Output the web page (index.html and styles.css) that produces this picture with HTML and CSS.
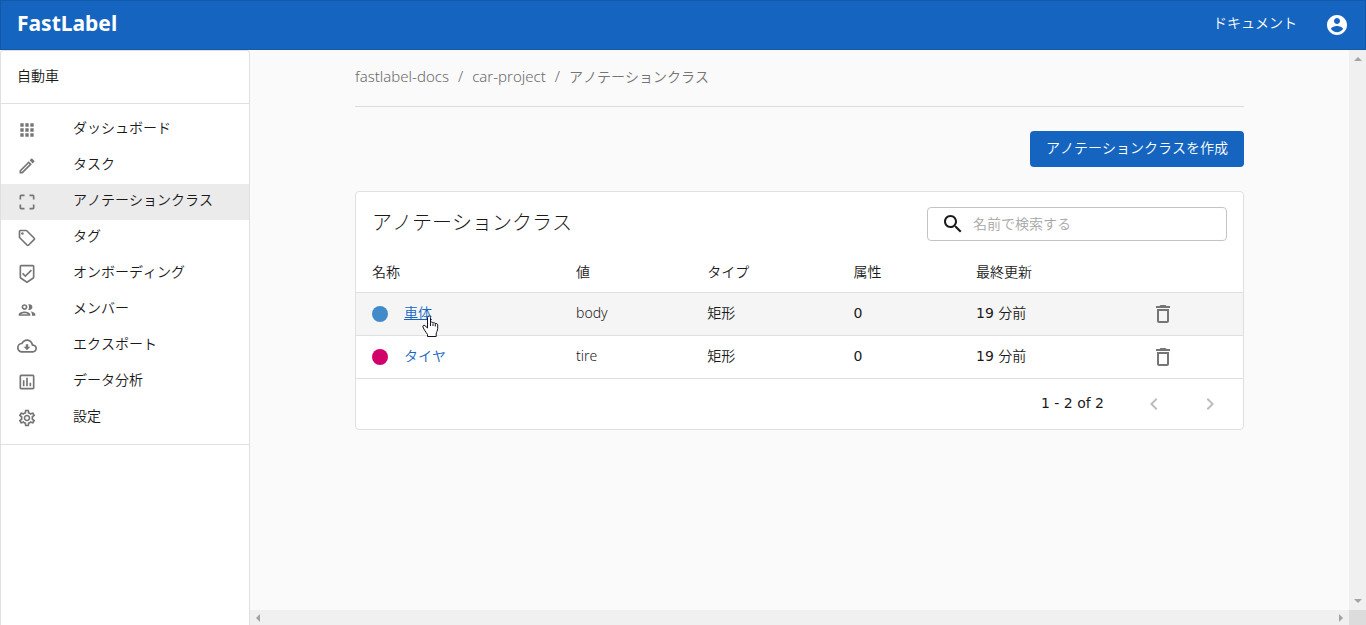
FILE: index.html
```html
<!DOCTYPE html>
<html lang="ja">
<head>
<meta charset="utf-8">
<title>FastLabel</title>
<link rel="stylesheet" href="styles.css">
</head>
<body>
<div class="app">
  <header class="topbar">
    <a class="brand" href="#">FastLabel</a>
    <div class="topbar-actions">
      <a class="label docs" href="#">ドキュメント</a>
      <button class="icon-button" type="button" aria-label="アカウント">
        <svg class="icon-lg" viewBox="0 0 24 24"><path d="M12 2C6.48 2 2 6.48 2 12s4.48 10 10 10 10-4.48 10-10S17.52 2 12 2zm0 3c1.66 0 3 1.34 3 3s-1.34 3-3 3-3-1.34-3-3 1.34-3 3-3zm0 14.200c-2.500 0-4.710-1.280-6-3.220.030-1.990 4-3.080 6-3.080 1.990 0 5.970 1.090 6 3.080-1.290 1.940-3.500 3.220-6 3.220z"/></svg>
      </button>
    </div>
  </header>

  <div class="body">
    <aside class="sidebar">
      <div class="project"><span class="label">自動車</span></div>
      <nav class="menu">
        <a class="menu-item" href="#"><svg class="icon" viewBox="0 0 24 24"><path d="M4 8h4V4H4v4zm6 12h4v-4h-4v4zm-6 0h4v-4H4v4zm0-6h4v-4H4v4zm6 0h4v-4h-4v4zm6-10v4h4V4h-4zm-6 4h4V4h-4v4zm6 6h4v-4h-4v4zm0 6h4v-4h-4v4z"/></svg><span class="label">ダッシュボード</span></a>
        <a class="menu-item" href="#"><svg class="icon" viewBox="0 0 24 24"><path d="M14.060 9.020l.92.92L5.920 19H5v-.92l9.060-9.060M17.660 3c-.25 0-.51.1-.7.290l-1.830 1.830 3.750 3.750 1.830-1.830c.39-.39.39-1.020 0-1.410l-2.340-2.340c-.2-.2-.45-.29-.71-.29zm-3.600 3.190L3 17.250V21h3.750L17.810 9.940l-3.750-3.750z"/></svg><span class="label">タスク</span></a>
        <a class="menu-item active" href="#" aria-current="page"><svg class="icon" viewBox="0 0 24 24"><path d="M3 5v4h2V5h4V3H5c-1.100 0-2 .9-2 2zm2 10H3v4c0 1.100.9 2 2 2h4v-2H5v-4zm14 4h-4v2h4c1.100 0 2-.9 2-2v-4h-2v4zm0-16h-4v2h4v4h2V5c0-1.100-.9-2-2-2z"/></svg><span class="label">アノテーションクラス</span></a>
        <a class="menu-item" href="#"><svg class="icon" viewBox="0 0 24 24"><path d="M21.410 11.580l-9-9C12.050 2.220 11.550 2 11 2H4c-1.100 0-2 .9-2 2v7c0 .55.22 1.050.59 1.420l9 9c.36.36.86.58 1.410.58s1.050-.22 1.410-.59l7-7c.37-.36.59-.86.59-1.410s-.23-1.060-.59-1.420zM13 20.010L4 11V4h7v-.01l9 9-7 7.020z"/><circle cx="6.500" cy="6.500" r="1.500"/></svg><span class="label">タグ</span></a>
        <a class="menu-item" href="#"><svg class="icon" viewBox="0 0 24 24"><path d="M19 1H5c-1.100 0-1.990.9-1.990 2L3 15.930c0 .69.35 1.300.88 1.660L12 23l8.110-5.410c.53-.36.88-.97.88-1.660L21 3c0-1.100-.9-2-2-2zm-7 19.600l-7-4.660V3h14v12.930l-7 4.670zm-2.010-7.420l-2.580-2.590L6 12l4 4 8-8-1.420-1.420z"/></svg><span class="label">オンボーディング</span></a>
        <a class="menu-item" href="#"><svg class="icon" viewBox="0 0 24 24"><path d="M9 13.750c-2.340 0-7 1.170-7 3.500V19h14v-1.750c0-2.330-4.660-3.500-7-3.500zM4.340 17c.84-.58 2.870-1.250 4.660-1.250s3.820.67 4.660 1.250H4.340zM9 12c1.930 0 3.500-1.570 3.500-3.500S10.930 5 9 5 5.500 6.570 5.500 8.500 7.070 12 9 12zm0-5c.83 0 1.500.67 1.500 1.500S9.830 10 9 10s-1.500-.67-1.500-1.500S8.170 7 9 7zm7.040 6.810c1.160.84 1.960 1.960 1.960 3.440V19h4v-1.750c0-2.020-3.500-3.170-5.960-3.440zM15 12c1.930 0 3.500-1.570 3.500-3.500S16.930 5 15 5c-.54 0-1.040.13-1.500.35.63.89 1 1.980 1 3.150s-.37 2.260-1 3.150c.46.22.96.35 1.500.35z"/></svg><span class="label">メンバー</span></a>
        <a class="menu-item" href="#"><svg class="icon" viewBox="0 0 24 24"><path d="M19.350 10.040C18.670 6.590 15.640 4 12 4 9.110 4 6.600 5.640 5.350 8.040 2.340 8.360 0 10.910 0 14c0 3.310 2.690 6 6 6h13c2.760 0 5-2.240 5-5 0-2.640-2.050-4.780-4.650-4.960zM19 18H6c-2.210 0-4-1.790-4-4 0-2.050 1.530-3.760 3.560-3.970l1.070-.11.5-.95C8.080 7.140 9.940 6 12 6c2.620 0 4.880 1.860 5.390 4.430l.3 1.500 1.530.11c1.560.1 2.780 1.410 2.780 2.960 0 1.650-1.350 3-3 3zm-5.550-8h-2.900v3H8l4 4 4-4h-2.550z"/></svg><span class="label">エクスポート</span></a>
        <a class="menu-item" href="#"><svg class="icon" viewBox="0 0 24 24"><path d="M19 3H5c-1.100 0-2 .9-2 2v14c0 1.100.9 2 2 2h14c1.100 0 2-.9 2-2V5c0-1.100-.9-2-2-2zm0 16H5V5h14v14zM7 10h2v7H7zm4-3h2v10h-2zm4 6h2v4h-2z"/></svg><span class="label">データ分析</span></a>
        <a class="menu-item" href="#"><svg class="icon" viewBox="0 0 24 24"><path d="M19.430 12.980c.04-.32.07-.64.07-.98 0-.34-.03-.66-.07-.98l2.110-1.650c.19-.15.24-.42.12-.64l-2-3.460c-.09-.16-.26-.25-.44-.25-.06 0-.12.010-.17.030l-2.490 1c-.52-.4-1.080-.73-1.690-.98l-.38-2.650C14.460 2.180 14.250 2 14 2h-4c-.25 0-.46.18-.49.42l-.38 2.650c-.61.25-1.170.59-1.690.98l-2.490-1c-.06-.02-.12-.03-.18-.03-.17 0-.34.090-.43.250l-2 3.460c-.13.22-.07.49.12.64l2.110 1.650c-.04.32-.07.65-.07.98 0 .33.030.66.070.98l-2.110 1.650c-.19.15-.24.42-.12.64l2 3.460c.09.16.26.25.44.25.06 0 .12-.01.17-.03l2.490-1c.52.4 1.080.73 1.690.98l.38 2.650c.03.24.24.42.49.42h4c.25 0 .46-.18.49-.42l.38-2.650c.61-.25 1.170-.59 1.690-.98l2.490 1c.06.02.12.03.18.03.17 0 .34-.09.43-.25l2-3.460c.12-.22.07-.49-.12-.64l-2.110-1.650zm-1.980-1.710c.04.31.05.52.05.73 0 .21-.02.43-.05.73l-.14 1.130.89.7 1.080.84-.7 1.210-1.270-.51-1.040-.42-.9.68c-.43.32-.84.56-1.250.73l-1.060.43-.16 1.130-.2 1.350h-1.400l-.19-1.350-.16-1.130-1.060-.43c-.43-.18-.83-.41-1.230-.71l-.91-.7-1.060.43-1.270.51-.7-1.210 1.080-.84.89-.7-.14-1.130c-.03-.31-.05-.54-.05-.74s.02-.43.05-.73l.14-1.130-.89-.7-1.080-.84.7-1.210 1.270.51 1.040.42.9-.68c.43-.32.84-.56 1.250-.73l1.060-.43.16-1.130.2-1.350h1.390l.19 1.350.16 1.130 1.060.43c.43.18.83.41 1.230.71l.91.7 1.060-.43 1.270-.51.7 1.210-1.070.85-.89.7.14 1.130zM12 8c-2.210 0-4 1.790-4 4s1.790 4 4 4 4-1.790 4-4-1.790-4-4-4zm0 6c-1.100 0-2-.9-2-2s.9-2 2-2 2 .9 2 2-.9 2-2 2z"/></svg><span class="label">設定</span></a>
      </nav>
    </aside>

    <div class="viewport">
      <main class="content">
        <nav class="breadcrumbs" aria-label="パンくず">
          <a class="label crumb" href="#">fastlabel-docs</a>
          <span class="label crumb">/</span>
          <a class="label crumb" href="#">car-project</a>
          <span class="label crumb">/</span>
          <span class="label">アノテーションクラス</span>
        </nav>
        <div class="actions">
          <button class="primary" type="button"><span class="label">アノテーションクラスを作成</span></button>
        </div>
        <section class="card">
          <div class="card-head">
            <h1 class="title label">アノテーションクラス</h1>
            <label class="search">
              <svg class="icon-lg" viewBox="0 0 24 24"><path d="M15.500 14h-.79l-.28-.27C15.410 12.590 16 11.110 16 9.500 16 5.910 13.090 3 9.500 3S3 5.910 3 9.500 5.910 16 9.500 16c1.610 0 3.090-.59 4.230-1.570l.27.28v.79l5 4.990L20.490 19l-4.990-5zm-6 0C7.010 14 5 11.990 5 9.500S7.010 5 9.500 5 14 7.010 14 9.500 11.990 14 9.500 14z"/></svg>
              <input class="search-input" type="text" placeholder="名前で検索する" aria-label="名前で検索する">
            </label>
          </div>
          <table class="table">
            <thead>
              <tr>
                <th class="col-name"><span class="label">名称</span></th>
                <th class="col-value"><span class="label">値</span></th>
                <th class="col-type"><span class="label">タイプ</span></th>
                <th class="col-attr"><span class="label">属性</span></th>
                <th class="col-date"><span class="label">最終更新</span></th>
                <th class="col-del"></th>
              </tr>
            </thead>
            <tbody>
              <tr class="hovered">
                <td><div class="name"><span class="dot dot-blue"></span><a class="link label underlined" href="#">車体<svg class="pointer" viewBox="0 0 17 23"><path d="M6 1.500c1.200-1.300 2.500-.5 2.500 1v5c1-.9 2-.6 2.400.4 1-.6 2-.2 2.300.7 1.200-.5 2.500.1 2.500 1.500v3.400c0 2.500-1.500 3.500-1.500 5.500v2.500H5.500v-2c-1.500-2.500-3.500-4.500-4.500-7.500-.5-1.500.8-2.300 2-1.300L5.500 13V2.500z"/><path class="pointer-lines" d="M8.500 7.500v3.500M11 8.500V11M13.300 9V11.500"/></svg></a></div></td>
                <td><span class="label">body</span></td>
                <td><span class="label">矩形</span></td>
                <td><span class="label num">0</span></td>
                <td><span class="label"><span class="num">19 </span>分前</span></td>
                <td class="center"><button class="icon-button muted" type="button" aria-label="車体を削除"><svg class="icon-lg" viewBox="0 0 24 24"><path d="M6 19c0 1.100.9 2 2 2h8c1.100 0 2-.9 2-2V7H6v12zM8 9h8v10H8V9zm7.500-5l-1-1h-5l-1 1H5v2h14V4z"/></svg></button></td>
              </tr>
              <tr>
                <td><div class="name"><span class="dot dot-pink"></span><a class="link label" href="#">タイヤ</a></div></td>
                <td><span class="label">tire</span></td>
                <td><span class="label">矩形</span></td>
                <td><span class="label num">0</span></td>
                <td><span class="label"><span class="num">19 </span>分前</span></td>
                <td class="center"><button class="icon-button muted" type="button" aria-label="タイヤを削除"><svg class="icon-lg" viewBox="0 0 24 24"><path d="M6 19c0 1.100.9 2 2 2h8c1.100 0 2-.9 2-2V7H6v12zM8 9h8v10H8V9zm7.500-5l-1-1h-5l-1 1H5v2h14V4z"/></svg></button></td>
              </tr>
            </tbody>
          </table>
          <div class="pager">
            <span class="num count">1 - 2 of 2</span>
            <button class="icon-button page-button" type="button" disabled aria-label="前のページ"><svg class="icon-lg" viewBox="0 0 24 24"><path d="M15.410 7.410L14 6l-6 6 6 6 1.410-1.410L10.830 12z"/></svg></button>
            <button class="icon-button page-button" type="button" disabled aria-label="次のページ"><svg class="icon-lg" viewBox="0 0 24 24"><path d="M10 6L8.590 7.410 13.170 12l-4.580 4.590L10 18l6-6z"/></svg></button>
          </div>
        </section>
      </main>
      <div class="scroll scroll-y"><i class="arrow arrow-up"></i><i class="arrow arrow-down"></i></div>
      <div class="scroll scroll-x"><i class="arrow arrow-left"></i><i class="arrow arrow-right"></i></div>
      <div class="scroll-corner"></div>
    </div>
  </div>
</div>
</body>
</html>
```

FILE: styles.css
```css
* {
  box-sizing: border-box;
}

body {
  margin: 0;
  background: #fafafa;
  color: #1a1a1a;
  font-family: "Noto Sans", "Noto Sans CJK JP", sans-serif;
  font-size: 14px;
  font-weight: 350;
  font-kerning: none;
  line-height: 20px;
}

a {
  color: inherit;
  text-decoration: none;
}

button,
input {
  font: inherit;
  font-kerning: none;
}

.app {
  display: flex;
  flex-direction: column;
  height: 100vh;
}

/* Labels sit slightly above the centre line of their icons */
.label {
  padding-bottom: 3px;
}

.num {
  font-family: "DejaVu Sans", sans-serif;
  font-weight: 400;
}

.icon {
  display: block;
  width: 20px;
  height: 20px;
  fill: currentColor;
}

.icon-lg {
  display: block;
  width: 24px;
  height: 24px;
  fill: currentColor;
}

.icon-button {
  display: inline-flex;
  padding: 0;
  border: 0;
  background: none;
  color: inherit;
}

.topbar {
  display: flex;
  align-items: center;
  justify-content: space-between;
  height: 50px;
  padding: 0 16px;
  border: 1px solid #1259a9;
  background: #1565c0;
  color: #fff;
}

.brand {
  padding-bottom: 5px;
  font-size: 21px;
  font-weight: 700;
}

.topbar-actions {
  display: flex;
  align-items: center;
  gap: 28px;
}

.body {
  display: flex;
  flex: 1;
  min-height: 0;
}

.sidebar {
  flex: 0 0 250px;
  border: 1px solid #e0e0e0;
  border-bottom: 0;
  border-radius: 4px 4px 0 0;
  background: #fff;
}

.project {
  display: flex;
  align-items: center;
  height: 53px;
  padding: 0 16px;
  border-bottom: 1px solid #e0e0e0;
}

.menu {
  padding: 8px 0;
  border-bottom: 1px solid #e0e0e0;
}

.menu-item {
  display: flex;
  align-items: center;
  gap: 36px;
  height: 36px;
  padding: 0 16px;
}

.menu-item .label,
.docs {
  padding-bottom: 5px;
}

.menu-item .icon {
  color: #757575;
}

.menu-item.active {
  background: #ebebeb;
}

.viewport {
  display: grid;
  grid-template: 1fr 15px / 1fr 17px;
  flex: 1;
}

.content {
  padding: 0 105px;
}

.breadcrumbs {
  display: flex;
  align-items: center;
  gap: 9px;
  height: 57px;
  border-bottom: 1px solid #dcdcdc;
  color: #757575;
}

.crumb {
  padding-bottom: 5px;
  color: #6a6a6a;
  font-size: 15px;
}

.actions {
  display: flex;
  justify-content: flex-end;
  padding: 24px 0;
}

.primary {
  display: flex;
  align-items: center;
  height: 36px;
  padding: 0 16px;
  border: 0;
  border-radius: 4px;
  background: #1565c0;
  color: #fff;
}

.card {
  border: 1px solid #e0e0e0;
  border-radius: 4px;
  background: #fff;
}

.card-head {
  display: flex;
  align-items: center;
  justify-content: space-between;
  height: 64px;
  padding: 0 16px;
}

.title {
  margin: 0;
  font-size: 20px;
  font-weight: 300;
}

.search {
  display: flex;
  align-items: center;
  gap: 8px;
  width: 300px;
  height: 34px;
  padding: 0 13px;
  border: 1px solid #c4c4c4;
  border-radius: 4px;
}

.search-input {
  flex: 1;
  min-width: 0;
  padding: 0 0 1px;
  border: 0;
  outline: 0;
  background: none;
}

.search-input::placeholder {
  color: #a6a6a6;
}

.table {
  width: 100%;
  border-collapse: collapse;
  table-layout: fixed;
}

.table th,
.table td {
  height: 43px;
  padding: 0 16px;
  border-bottom: 1px solid #e0e0e0;
  font-weight: 350;
  text-align: left;
}

.table th {
  height: 36px;
}

.table .label {
  display: block;
}

.table td .label {
  padding-bottom: 2px;
}

.table .center {
  text-align: center;
}

.col-name { width: 23%; }
.col-value { width: 14.8%; }
.col-type { width: 16.5%; }
.col-attr { width: 13.8%; }
.col-date { width: 13.9%; }
.col-del { width: 18%; }

.hovered {
  background: #f5f5f5;
}

.name {
  display: flex;
  align-items: center;
  gap: 16px;
}

.dot {
  width: 16px;
  height: 16px;
  border-radius: 50%;
}

.dot-blue { background: #428bca; }
.dot-pink { background: #d1006a; }

.link {
  position: relative;
  color: #1565c0;
}

.underlined {
  text-decoration: underline;
}

.pointer {
  position: absolute;
  top: 12px;
  left: 18px;
  width: 17px;
  height: 23px;
  fill: #fff;
  stroke: #101020;
}

.pointer-lines {
  fill: none;
}

.muted {
  display: flex;
  margin: 0 auto;
  color: #757575;
}

.pager {
  display: flex;
  align-items: center;
  justify-content: flex-end;
  gap: 16px;
  height: 50px;
  padding: 0 13px;
}

.count {
  margin-right: 14px;
  padding-bottom: 1px;
}

.page-button {
  justify-content: center;
  width: 40px;
  color: #bdbdbd;
}

.scroll {
  display: flex;
  align-items: center;
  justify-content: space-between;
  background: #f0f0f0;
}

.scroll-y {
  flex-direction: column;
  padding: 7px 0;
}

.scroll-x {
  padding: 0 6px;
}

.scroll-corner {
  background: #dcdcdc;
}

.arrow {
  border: 4px solid transparent;
}

.arrow-up { border-top: 0; border-bottom-color: #a3a3a3; }
.arrow-down { border-bottom: 0; border-top-color: #a3a3a3; }
.arrow-left { border-left: 0; border-right-color: #a3a3a3; }
.arrow-right { border-right: 0; border-left-color: #a3a3a3; }
```
